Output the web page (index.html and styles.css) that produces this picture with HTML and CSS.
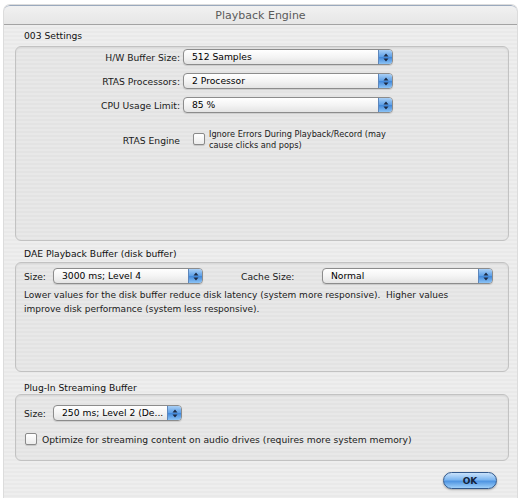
FILE: index.html
```html
<!DOCTYPE html>
<html lang="en">
<head>
    <meta charset="UTF-8">
    <title>Playback Engine</title>
    <link rel="stylesheet" href="styles.css">
</head>
<body>
<div class="window">
    <div class="titlebar">Playback Engine</div>
    <div class="content">
        <div class="glabel gl1">003 Settings</div>
        <div class="group g1">
            <div class="grid">
                <span class="lbl">H/W Buffer Size:</span>
                <div class="popup w210"><span class="val">512 Samples</span><span class="arrows"><svg width="6" height="9" viewBox="0 0 6 9"><path d="M3 0.5L5.5 3.5H0.5Z M3 8.5L5.5 5.5H0.5Z" fill="#1c2a44"/></svg></span></div>
                <span class="lbl">RTAS Processors:</span>
                <div class="popup w210"><span class="val">2 Processor</span><span class="arrows"><svg width="6" height="9" viewBox="0 0 6 9"><path d="M3 0.5L5.5 3.5H0.5Z M3 8.5L5.5 5.5H0.5Z" fill="#1c2a44"/></svg></span></div>
                <span class="lbl">CPU Usage Limit:</span>
                <div class="popup w210"><span class="val">85 %</span><span class="arrows"><svg width="6" height="9" viewBox="0 0 6 9"><path d="M3 0.5L5.5 3.5H0.5Z M3 8.5L5.5 5.5H0.5Z" fill="#1c2a44"/></svg></span></div>
                <span class="lbl engine-lbl">RTAS Engine</span>
                <div class="engine">
                    <span class="check"></span>
                    <span class="small">Ignore Errors During Playback/Record (may<br>cause clicks and pops)</span>
                </div>
            </div>
        </div>

        <div class="glabel gl2">DAE Playback Buffer (disk buffer)</div>
        <div class="group g2">
            <div class="line">
                <span class="lbl2 size">Size:</span>
                <div class="popup w150"><span class="val">3000 ms; Level 4</span><span class="arrows"><svg width="6" height="9" viewBox="0 0 6 9"><path d="M3 0.5L5.5 3.5H0.5Z M3 8.5L5.5 5.5H0.5Z" fill="#1c2a44"/></svg></span></div>
                <span class="lbl2 cache">Cache Size:</span>
                <div class="popup w171"><span class="val">Normal</span><span class="arrows"><svg width="6" height="9" viewBox="0 0 6 9"><path d="M3 0.5L5.5 3.5H0.5Z M3 8.5L5.5 5.5H0.5Z" fill="#1c2a44"/></svg></span></div>
            </div>
            <p class="desc">Lower values for the disk buffer reduce disk latency (system more responsive).&nbsp; Higher values<br>improve disk performance (system less responsive).</p>
        </div>

        <div class="glabel gl3">Plug-In Streaming Buffer</div>
        <div class="group g3">
            <div class="line">
                <span class="lbl2 size">Size:</span>
                <div class="popup w129"><span class="val">250 ms; Level 2 (De...</span><span class="arrows"><svg width="6" height="9" viewBox="0 0 6 9"><path d="M3 0.5L5.5 3.5H0.5Z M3 8.5L5.5 5.5H0.5Z" fill="#1c2a44"/></svg></span></div>
            </div>
            <div class="optline">
                <span class="check"></span>
                <span>Optimize for streaming content on audio drives (requires more system memory)</span>
            </div>
        </div>

        <div class="buttons">
            <button class="okbtn">OK</button>
        </div>
    </div>
</div>
</body>
</html>
```

FILE: styles.css
```css
*{
    box-sizing: border-box;
}
body{
    margin: 0;
    background: #fff;
    font-family: 'DejaVu Sans', Verdana, sans-serif;
    font-size: 9.2px;
    color: #1a1a1a;
}
.window{
    margin: 5px 3px 0 4px;
    height: 493px;
    border-radius: 6px 6px 0 0;
    background: repeating-linear-gradient(#eeeeee 0 2px, #e9e9e9 2px 4px);
    box-shadow: 0 0 0 1px #dcdcdc;
    overflow: hidden;
}
.titlebar{
    height: 20px;
    line-height: 19px;
    text-align: center;
    font-size: 11px;
    color: #5a5a5a;
    background: linear-gradient(#f1f1f1, #e6e6e6);
    border-bottom: 1px solid #a3a3a3;
    border-radius: 6px 6px 0 0;
    border-top: 1px solid #9aa9bd;
}
.content{
    padding: 5px 8px 0 11px;
    display: flex;
    flex-direction: column;
}
.glabel{
    line-height: 12px;
    height: 12px;
    padding-left: 9px;
    color: #111;
}
.gl1{ margin-bottom: 4px; }
.gl2{ margin-top: 7px; margin-bottom: 2px; }
.gl3{ margin-top: 10px; }
.group{
    border: 1px solid #c2c2c2;
    border-radius: 6px;
    background: rgba(0, 0, 0, 0.022);
    box-shadow: inset 0 1px 2px rgba(0, 0, 0, 0.06);
}
.g1{ height: 195px; padding-top: 2px; }
.g2{ height: 110px; padding: 5px 0 0 8px; }
.g3{ height: 67px; padding: 10px 0 0 8px; }

.grid{
    display: grid;
    grid-template-columns: 164px 210px;
    column-gap: 3px;
    row-gap: 8px;
}
.lbl{
    text-align: right;
    align-self: center;
    white-space: nowrap;
}
.engine-lbl{
    margin-top: 8px;
}
.engine{
    margin-top: 8px;
    display: flex;
    align-items: flex-start;
    padding-left: 10px;
}
.engine .check{
    margin-top: 4px;
    margin-right: 4px;
}
.small{
    font-size: 8.2px;
    line-height: 11px;
    white-space: nowrap;
}

.popup{
    height: 16px;
    display: flex;
    border: 1px solid #8c8c8c;
    border-radius: 4px;
    background: linear-gradient(#ffffff, #f4f4f4 50%, #e4e4e4);
    box-shadow: 0 1px 1px rgba(0, 0, 0, 0.12);
    overflow: hidden;
}
.w210{ width: 210px; }
.w150{ width: 150px; }
.w171{ width: 171px; }
.w129{ width: 129px; }
.val{
    flex: 1;
    padding-left: 8px;
    line-height: 14px;
    color: #000;
    white-space: nowrap;
    overflow: hidden;
}
.arrows{
    width: 14px;
    display: flex;
    align-items: center;
    justify-content: center;
    background: linear-gradient(#a9cff5, #5b9ee6 50%, #3f86d9 51%, #8cc3f5);
    border-left: 1px solid #5d86bb;
}

.line{
    display: flex;
    align-items: center;
}
.lbl2{
    white-space: nowrap;
}
.size{ width: 29px; }
.cache{ width: 81px; margin-left: 38px; }
.desc{
    margin: 4px 0 0 0;
    line-height: 14px;
    white-space: nowrap;
    font-size: 9px;
}

.check{
    display: inline-block;
    width: 12px;
    height: 12px;
    flex: none;
    border: 1px solid #8a8a8a;
    border-radius: 2px;
    background: linear-gradient(#ffffff, #ececec);
    box-shadow: 0 1px 1px rgba(0, 0, 0, 0.15);
}
.optline{
    display: flex;
    align-items: center;
    margin-top: 12px;
    padding-left: 1px;
    white-space: nowrap;
}
.optline .check{
    margin-right: 5px;
}

.buttons{
    display: flex;
    justify-content: flex-end;
    margin-top: 11px;
    padding-right: 12px;
}
.okbtn{
    width: 54px;
    height: 17px;
    padding: 0;
    border: 1px solid #33598c;
    border-radius: 9px;
    background: linear-gradient(#c9e2fb, #7db6f0 45%, #4f95e2 55%, #9fd0fa);
    font-family: 'DejaVu Sans', Verdana, sans-serif;
    font-size: 9px;
    font-weight: bold;
    color: #14233a;
    box-shadow: 0 1px 2px rgba(0, 0, 0, 0.3);
}
```
